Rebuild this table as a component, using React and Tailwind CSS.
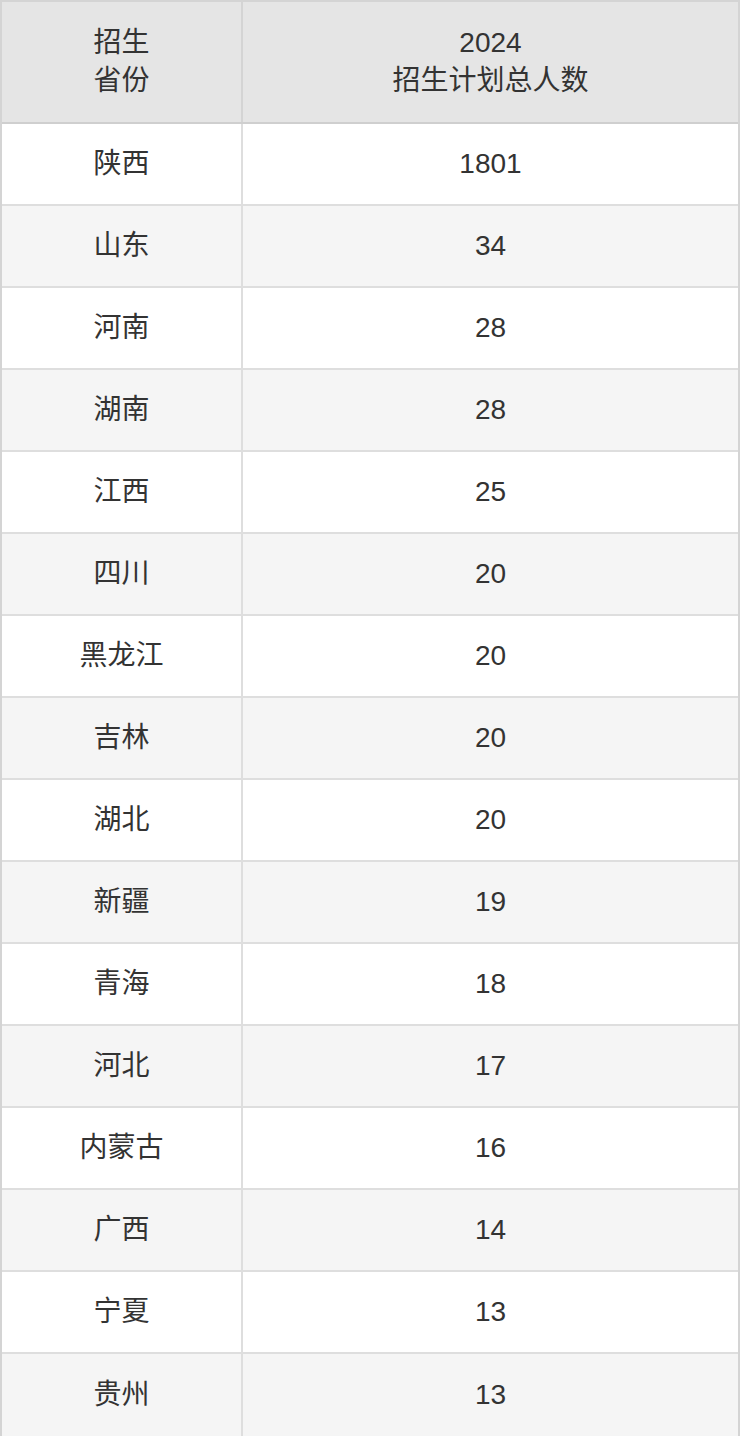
const rows = [
	['陕西', '1801'],
	['山东', '34'],
	['河南', '28'],
	['湖南', '28'],
	['江西', '25'],
	['四川', '20'],
	['黑龙江', '20'],
	['吉林', '20'],
	['湖北', '20'],
	['新疆', '19'],
	['青海', '18'],
	['河北', '17'],
	['内蒙古', '16'],
	['广西', '14'],
	['宁夏', '13'],
	['贵州', '13'],
];

export default function App() {
	return (
		<div
			className="w-[740px] bg-white text-[#333] text-[28px] leading-[42px]"
			style={{ fontFamily: '"Liberation Sans", "Noto Sans CJK SC", sans-serif' }}
		>
			<div className="border-2 border-[#d4d4d4]">
				<div className="flex h-[122px] bg-[#e5e5e5] border-b-2 border-[#cfcfcf] leading-[38px]">
					<div className="w-[241px] border-r-2 border-[#d4d4d4] flex items-center justify-center text-center">
						<div>
							招生
							<br />
							省份
						</div>
					</div>
					<div className="flex-1 flex items-center justify-center text-center">
						<div>
							2024
							<br />
							招生计划总人数
						</div>
					</div>
				</div>
				{rows.map(([prov, num], i) => (
					<div
						key={prov}
						className={`flex h-[82px] ${i < rows.length - 1 ? 'border-b-2' : ''} border-[#dedede] ${i % 2 === 1 ? 'bg-[#f5f5f5]' : 'bg-white'}`}
					>
						<div className="w-[241px] border-r-2 border-[#dedede] flex items-center justify-center">
							{prov}
						</div>
						<div className="flex-1 flex items-center justify-center">{num}</div>
					</div>
				))}
			</div>
		</div>
	);
}
